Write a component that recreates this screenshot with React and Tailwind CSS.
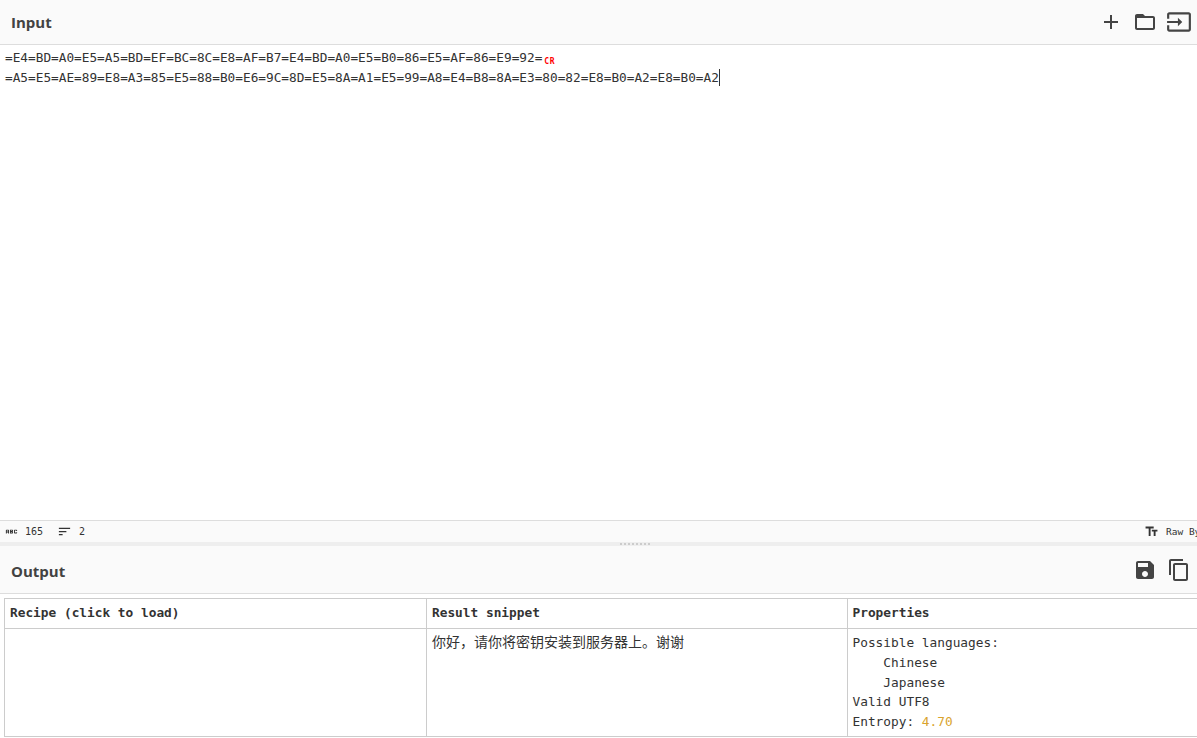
const sans = "font-['Open_Sans','Noto_Sans',sans-serif]";
const mono = "font-['DejaVu_Sans_Mono','Noto_Sans_CJK_SC',monospace]";

const Icon = ({ d, className = "w-6 h-6" }) => (
  <svg viewBox="0 0 24 24" fill="currentColor" className={className}>
    <path d={d} />
  </svg>
);

const icons = {
  add: "M19 13h-6v6h-2v-6H5v-2h6V5h2v6h6v2z",
  folder: "M20 6h-8l-2-2H4c-1.1 0-1.99.9-1.99 2L2 18c0 1.1.9 2 2 2h16c1.1 0 2-.9 2-2V8c0-1.1-.9-2-2-2zm0 12H4V8h16v10z",
  input: "M21 3.01H3c-1.1 0-2 .9-2 2V9h2V4.99h18v14.03H3V15H1v4.01c0 1.1.9 1.98 2 1.98h18c1.1 0 2-.88 2-1.98v-14c0-1.11-.9-2-2-2zM11 16l4-4-4-4v3H1v2h10v3z",
  save: "M17 3H5c-1.11 0-2 .9-2 2v14c0 1.1.89 2 2 2h14c1.1 0 2-.9 2-2V7l-4-4zm-5 16c-1.66 0-3-1.34-3-3s1.34-3 3-3 3 1.34 3 3-1.34 3-3 3zm3-10H5V5h10v4z",
  copy: "M16 1H4c-1.1 0-2 .9-2 2v14h2V3h12V1zm3 4H8c-1.1 0-2 .9-2 2v14c0 1.1.9 2 2 2h11c1.1 0 2-.9 2-2V7c0-1.1-.9-2-2-2zm0 16H8V7h11v14z",
  font: "M2.5 4v3h5v12h3V7h5V4h-13zm19 5h-9v3h3v7h3v-7h3V9z",
  sort: "M3 18h6v-2H3v2zM3 6v2h18V6H3zm0 7h12v-2H3v2z",
  abc: "M21 11h-1.5v-.5h-2v3h2V13H21v1c0 .55-.45 1-1 1h-3c-.55 0-1-.45-1-1v-4c0-.55.45-1 1-1h3c.55 0 1 .45 1 1v1zM8 10v5H6.5v-1.5h-2V15H3v-5c0-.55.45-1 1-1h3c.55 0 1 .45 1 1zm-1.5.5h-2V12h2v-1.5zm7 1.5c.55 0 1 .45 1 1v1c0 .55-.45 1-1 1h-4V9h4c.55 0 1 .45 1 1v1c0 .55-.45 1-1 1zM11 10.5v.75h2v-.75h-2zm2 2.25h-2v.75h2v-.75z",
};

const Header = ({ title, className, titleClass = "", children }) => (
  <div className={`flex items-center justify-between bg-[#fafafa] border-b border-[#ddd] pl-[11px] ${className}`}>
    <h2 className={`${sans} text-[15px] font-bold text-[#424242] ${titleClass}`}>{title}</h2>
    <div className="flex items-center gap-[10px] text-[#444]">{children}</div>
  </div>
);

const App = () => {
  return (
    <div className="w-[1197px] h-[738px] overflow-hidden bg-white text-[#333]">
      <Header title="Input" className="h-[45px] pr-[5px]">
        <Icon d={icons.add} className="w-6 h-6 translate-x-px" />
        <Icon d={icons.folder} className="w-6 h-6 translate-x-px" />
        <Icon d={icons.input} className="w-[26px] h-[26px]" />
      </Header>

      <div className={`${mono} h-[475px] pl-[5px] pt-[3px] text-[12.76px] leading-[19.8px] text-[#333]`}>
        <div className="flex items-center">
          =E4=BD=A0=E5=A5=BD=EF=BC=8C=E8=AF=B7=E4=BD=A0=E5=B0=86=E5=AF=86=E9=92=
          <span className="ml-[2px] mt-[8px] text-[8px] leading-none font-bold tracking-[0.5px] text-[#f00]">CR</span>
        </div>
        <div className="flex items-center">
          =A5=E5=AE=89=E8=A3=85=E5=88=B0=E6=9C=8D=E5=8A=A1=E5=99=A8=E4=B8=8A=E3=80=82=E8=B0=A2=E8=B0=A2
          <span className="w-px h-[17px] bg-[#333]" />
        </div>
      </div>

      <div className={`${mono} flex items-center h-[22px] bg-[#fafafa] border-t border-[#ddd] pl-[4px] text-[10px] text-[#333] overflow-hidden`}>
        <Icon d={icons.abc} className="w-[15px] h-[15px]" />
        <span className="ml-[6px]">165</span>
        <Icon d={icons.sort} className="ml-[14px] w-[15px] h-[15px]" />
        <span className="ml-[7px]">2</span>
        <div className="ml-auto flex items-center w-[53px] shrink-0 overflow-hidden whitespace-nowrap">
          <Icon d={icons.font} className="w-[15px] h-[15px] shrink-0" />
          <span className="ml-[7px] mt-px text-[9.5px]">Raw Bytes</span>
        </div>
      </div>

      <div className="flex items-center justify-center gap-[2px] h-[4px] pl-[72px] bg-[#eee]">
        {[0, 1, 2, 3, 4, 5, 6, 7].map((i) => (
          <span key={i} className="w-[2px] h-[2px] bg-[#ccc]" />
        ))}
      </div>

      <Header title="Output" className="h-[48px] pr-[6px]" titleClass="mt-[4px]">
        <Icon d={icons.save} />
        <Icon d={icons.copy} />
      </Header>

      <div className="pl-[4px] pt-[4px]">
        <div className={`${mono} w-[1270px] grid grid-cols-[422px_421px_427px] grid-rows-[30px_107px] border border-[#ccc] text-[12.8px] leading-[19.75px] text-[#333]`}>
          <div className="font-bold pl-[5px] pt-[4px] border-b border-r border-[#ccc]">Recipe (click to load)</div>
          <div className="font-bold pl-[5px] pt-[4px] border-b border-r border-[#ccc]">Result snippet</div>
          <div className="font-bold pl-[4.5px] pt-[4px] border-b border-[#ccc]">Properties</div>
          <div className="border-r border-[#ccc]" />
          <div className="pl-[5px] pt-[4px] text-[14px] border-r border-[#ccc]">{"你好\uFF0C请你将密钥安装到服务器上。谢谢"}</div>
          <div className="pl-[4.5px] pt-[4px] whitespace-pre">
            {"Possible languages:\n    Chinese\n    Japanese\nValid UTF8\nEntropy: "}
            <span className="text-[#d9a32e]">4.70</span>
          </div>
        </div>
      </div>
    </div>
  );
};

export default App;
